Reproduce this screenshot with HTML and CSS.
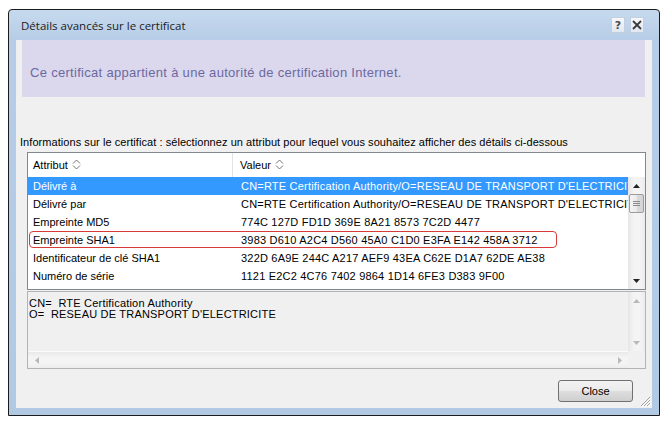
FILE: index.html
```html
<!DOCTYPE html>
<html lang="fr">
  <head>
    <meta charset="UTF-8" />
    <title>Détails avancés sur le certificat</title>
    <link rel="stylesheet" href="styles.css">
  </head>
  <body>
    <div class="window">
      <div class="titlebar">
        <span class="title">Détails avancés sur le certificat</span>
        <div class="caption-btns">
          <span class="cap-btn cap-help">?</span>
          <span class="cap-btn">
            <svg width="10" height="10" viewBox="0 0 10 10"><path d="M1 1 L9 9 M9 1 L1 9" stroke="#3a3a3a" stroke-width="1.8" fill="none"/></svg>
          </span>
        </div>
      </div>

      <div class="client">
        <div class="banner">Ce certificat appartient à une autorité de certification Internet.</div>

        <p class="hint">Informations sur le certificat : sélectionnez un attribut pour lequel vous souhaitez afficher des détails ci-dessous</p>

        <div class="listview">
          <div class="lv-header">
            <div class="col col-attr">Attribut
              <svg class="sort" width="9" height="11" viewBox="0 0 9 11"><path d="M1 4.5 L4.5 1 L8 4.5 M1 6.5 L4.5 10 L8 6.5" stroke="#777" fill="none"/></svg>
            </div>
            <div class="col col-val">Valeur
              <svg class="sort" width="9" height="11" viewBox="0 0 9 11"><path d="M1 4.5 L4.5 1 L8 4.5 M1 6.5 L4.5 10 L8 6.5" stroke="#777" fill="none"/></svg>
            </div>
          </div>
          <div class="lv-body">
            <div class="lv-rows">
              <div class="row selected">
                <span class="cell-attr">Délivré à</span>
                <span class="cell-val">CN=RTE Certification Authority/O=RESEAU DE TRANSPORT D'ELECTRICITE</span>
              </div>
              <div class="row">
                <span class="cell-attr">Délivré par</span>
                <span class="cell-val">CN=RTE Certification Authority/O=RESEAU DE TRANSPORT D'ELECTRICITE</span>
              </div>
              <div class="row">
                <span class="cell-attr">Empreinte MD5</span>
                <span class="cell-val">774C 127D FD1D 369E 8A21 8573 7C2D 4477</span>
              </div>
              <div class="row">
                <span class="cell-attr">Empreinte SHA1</span>
                <span class="cell-val">3983 D610 A2C4 D560 45A0 C1D0 E3FA E142 458A 3712</span>
                <span class="mark"></span>
              </div>
              <div class="row">
                <span class="cell-attr">Identificateur de clé SHA1</span>
                <span class="cell-val">322D 6A9E 244C A217 AEF9 43EA C62E D1A7 62DE AE38</span>
              </div>
              <div class="row">
                <span class="cell-attr">Numéro de série</span>
                <span class="cell-val">1121 E2C2 4C76 7402 9864 1D14 6FE3 D383 9F00</span>
              </div>
            </div>
            <div class="vscroll">
              <div class="sb-btn">
                <svg width="7" height="4" viewBox="0 0 7 4"><path d="M0 4 L3.5 0 L7 4 Z" fill="#222"/></svg>
              </div>
              <div class="thumb">
                <svg width="7" height="5" viewBox="0 0 7 5"><path d="M0 0.5 H7 M0 2.5 H7 M0 4.5 H7" stroke="#8a8a8a"/></svg>
              </div>
              <div class="sb-fill"></div>
              <div class="sb-btn">
                <svg width="7" height="4" viewBox="0 0 7 4"><path d="M0 0 L3.5 4 L7 0 Z" fill="#222"/></svg>
              </div>
            </div>
          </div>
        </div>

        <div class="details">
          <div class="details-text">CN= &nbsp;RTE Certification Authority<br>O= &nbsp;RESEAU DE TRANSPORT D'ELECTRICITE</div>
          <div class="vscroll off">
            <div class="sb-btn">
              <svg width="7" height="4" viewBox="0 0 7 4"><path d="M0 4 L3.5 0 L7 4 Z" fill="#b9b9b9"/></svg>
            </div>
            <div class="sb-fill"></div>
            <div class="sb-btn">
              <svg width="7" height="4" viewBox="0 0 7 4"><path d="M0 0 L3.5 4 L7 0 Z" fill="#b9b9b9"/></svg>
            </div>
          </div>
          <div class="hscroll">
            <div class="sb-btn">
              <svg width="4" height="7" viewBox="0 0 4 7"><path d="M4 0 L0 3.5 L4 7 Z" fill="#b9b9b9"/></svg>
            </div>
            <div class="sb-fill"></div>
            <div class="sb-btn">
              <svg width="4" height="7" viewBox="0 0 4 7"><path d="M0 0 L4 3.5 L0 7 Z" fill="#b9b9b9"/></svg>
            </div>
          </div>
          <div class="corner"></div>
        </div>

        <div class="footer">
          <button class="btn" type="button">Close</button>
          <svg class="grip" width="12" height="12" viewBox="0 0 12 12">
            <path d="M11 2 L2 11 M11 5 L5 11 M11 8 L8 11" stroke="#a3a3a3" fill="none"/>
            <path d="M12 3 L3 12 M12 6 L6 12 M12 9 L9 12" stroke="#ffffff" fill="none"/>
          </svg>
        </div>
      </div>
    </div>
  </body>
</html>
```

FILE: styles.css
```css
* {
  margin: 0;
  padding: 0;
  box-sizing: border-box;
}

body {
  background: #ffffff;
  padding: 9px 0 0 8px;
  font-family: "Liberation Sans", Arial, sans-serif;
  font-size: 11px;
  color: #000;
}

/* Cadre de la fenêtre */
.window {
  width: 652px;
  height: 407px;
  border: 1px solid #1b1b1b;
  border-radius: 4px 4px 0 0;
  background: linear-gradient(#c6d9ee 0, #b7cde7 30px, #b2c9e3 100%);
  padding: 0 7px 7px 7px;
  display: flex;
  flex-direction: column;
}

.titlebar {
  height: 30px;
  display: flex;
  align-items: flex-start;
  padding: 0 8px 0 5px;
}

.title {
  flex: 1;
  font-family: "Open Sans", sans-serif;
  font-size: 11.5px;
  color: #1c1c1c;
  padding-top: 8px;
}

.caption-btns {
  display: flex;
  gap: 5px;
  margin-top: 7px;
}

.cap-btn {
  width: 14px;
  height: 16px;
  background: linear-gradient(#f5f7fa, #e2e8f0);
  border: 1px solid #c2cfdf;
  display: flex;
  align-items: center;
  justify-content: center;
}

.cap-help {
  font-family: "DejaVu Sans", sans-serif;
  font-weight: bold;
  font-size: 11px;
  color: #4a4a4a;
}

/* Zone client */
.client {
  height: 368px;
  background: #f0f0f0;
  display: flex;
  flex-direction: column;
}

.banner {
  height: 57px;
  margin: 0 7px 0 6px;
  background: #dbd8ee;
  color: #6b68a0;
  font-size: 13px;
  letter-spacing: 0.3px;
  display: flex;
  align-items: center;
  padding: 7px 0 0 8px;
}

.hint {
  margin: 39px 0 3px 4px;
  line-height: 13px;
  letter-spacing: 0.06px;
  white-space: nowrap;
}

/* Liste des attributs */
.listview {
  margin: 0 6px 0 11px;
  height: 138px;
  border: 1px solid #828790;
  background: #ffffff;
  display: flex;
  flex-direction: column;
}

.lv-header {
  height: 24px;
  display: flex;
  flex-shrink: 0;
}

.col {
  display: flex;
  align-items: center;
  gap: 4px;
}

.col-attr {
  width: 205px;
  padding-left: 5px;
  border-right: 1px solid #e3e3e3;
}

.col-val {
  flex: 1;
  padding-left: 7px;
}

.sort {
  margin-top: -2px;
}

.lv-body {
  flex: 1;
  display: flex;
  min-height: 0;
}

.lv-rows {
  flex: 1;
  overflow: hidden;
}

.row {
  position: relative;
  height: 18px;
  display: flex;
  align-items: center;
}

.row.selected {
  background: #3399ff;
  color: #ffffff;
}

.cell-attr {
  width: 206px;
  padding-left: 5px;
  flex-shrink: 0;
}

.cell-val {
  flex: 1;
  padding-left: 7px;
  letter-spacing: 0.2px;
  white-space: nowrap;
  overflow: hidden;
}

/* Encadré rouge autour de l'empreinte SHA1 */
.mark {
  position: absolute;
  left: 1px;
  top: 0;
  width: 528px;
  height: 17px;
  border: 1.5px solid #d83a3a;
  border-radius: 4px;
}

/* Barres de défilement */
.vscroll {
  width: 17px;
  flex-shrink: 0;
  display: flex;
  flex-direction: column;
  background: linear-gradient(90deg, #e6e6e6, #f4f4f4 35%, #f4f4f4 70%, #ebebeb);
}

.sb-btn {
  width: 17px;
  height: 17px;
  flex-shrink: 0;
  display: flex;
  align-items: center;
  justify-content: center;
}

.sb-fill {
  flex: 1;
}

.thumb {
  height: 19px;
  margin: 0 1px;
  border: 1px solid #9c9c9c;
  border-radius: 2px;
  background: linear-gradient(90deg, #f4f4f4, #eaeaea 50%, #dadada 51%, #d4d4d4);
  display: flex;
  align-items: center;
  justify-content: center;
}

/* Zone de détail */
.details {
  margin: 1px 6px 0 11px;
  height: 78px;
  border: 1px solid #b4b4b4;
  background: #f0f0f0;
  display: grid;
  grid-template-columns: 1fr 17px;
  grid-template-rows: 1fr 17px;
}

.details-text {
  padding: 6px 1px 0;
  line-height: 11px;
  letter-spacing: 0.2px;
  white-space: nowrap;
}

.hscroll {
  display: flex;
  background: linear-gradient(#e9e9e9, #f4f4f4 35%, #f4f4f4 70%, #ececec);
  border-top: 1px solid #fbfbfb;
}

.corner {
  background: #f0f0f0;
}

/* Bas de la fenêtre */
.footer {
  flex: 1;
  display: flex;
  justify-content: flex-end;
  align-items: flex-start;
  padding-top: 11px;
}

.btn {
  width: 75px;
  height: 22px;
  border: 1px solid #707070;
  border-radius: 3px;
  background: linear-gradient(#f2f2f2 0%, #ebebeb 50%, #dddddd 51%, #cfcfcf 100%);
  font-family: "Liberation Sans", Arial, sans-serif;
  font-size: 11px;
  color: #000;
}

.grip {
  align-self: flex-end;
  margin: 0 1px 1px 6px;
}
```
